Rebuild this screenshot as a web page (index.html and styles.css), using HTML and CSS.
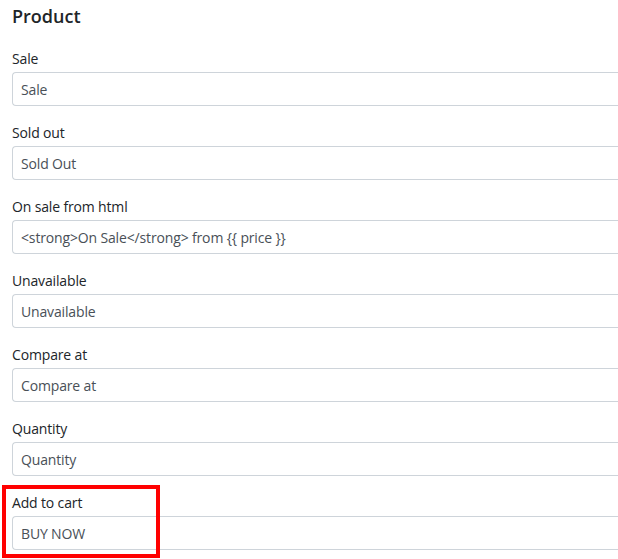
FILE: index.html
```html
<!DOCTYPE html>
<html lang="en">
<head>
<meta charset="utf-8">
<title>Product</title>
<link rel="stylesheet" href="styles.css">
</head>
<body>
<div class="panel">
  <h2 class="title">Product</h2>
  <div class="field">
    <label class="label">Sale</label>
    <input class="input" type="text" value="Sale">
  </div>
  <div class="field">
    <label class="label">Sold out</label>
    <input class="input" type="text" value="Sold Out">
  </div>
  <div class="field">
    <label class="label">On sale from html</label>
    <input class="input" type="text" value="<strong>On Sale</strong> from {{ price }}">
  </div>
  <div class="field">
    <label class="label">Unavailable</label>
    <input class="input" type="text" value="Unavailable">
  </div>
  <div class="field">
    <label class="label">Compare at</label>
    <input class="input" type="text" value="Compare at">
  </div>
  <div class="field">
    <label class="label">Quantity</label>
    <input class="input" type="text" value="Quantity">
  </div>
  <div class="field highlighted">
    <label class="label">Add to cart</label>
    <input class="input" type="text" value="BUY NOW">
    <div class="highlight-box"></div>
  </div>
</div>
</body>
</html>
```

FILE: styles.css
```css
html, body {
  margin: 0;
  padding: 0;
  background: #ffffff;
  overflow: hidden;
}

body {
  font-family: "Segoe UI", "Open Sans", "Noto Sans", sans-serif;
  font-size: 14px;
  letter-spacing: -0.15px;
  color: #212529;
}

.panel {
  box-sizing: border-box;
  width: 618px;
  padding: 0 0 0 12px;
}

.title {
  margin: 0;
  padding-top: 4px;
  height: 44px;
  font-size: 18px;
  font-weight: 600;
  line-height: 24px;
  letter-spacing: 0;
  color: #212529;
}

.field {
  position: relative;
  margin-bottom: 16px;
}

.label {
  display: block;
  line-height: 21px;
  margin-bottom: 3px;
  color: #212529;
}

.input {
  display: block;
  box-sizing: border-box;
  width: 100%;
  height: 34px;
  margin: 0;
  padding: 0 8px;
  border: 1px solid #ced4da;
  border-right: none;
  border-radius: 4px 0 0 4px;
  font-family: inherit;
  font-size: 14px;
  letter-spacing: -0.15px;
  color: #495057;
  background: #fff;
  outline: none;
}

.highlight-box {
  position: absolute;
  left: -10px;
  top: -7px;
  width: 158px;
  height: 73px;
  box-sizing: border-box;
  border: 4px solid #ff0000;
  pointer-events: none;
}
```
